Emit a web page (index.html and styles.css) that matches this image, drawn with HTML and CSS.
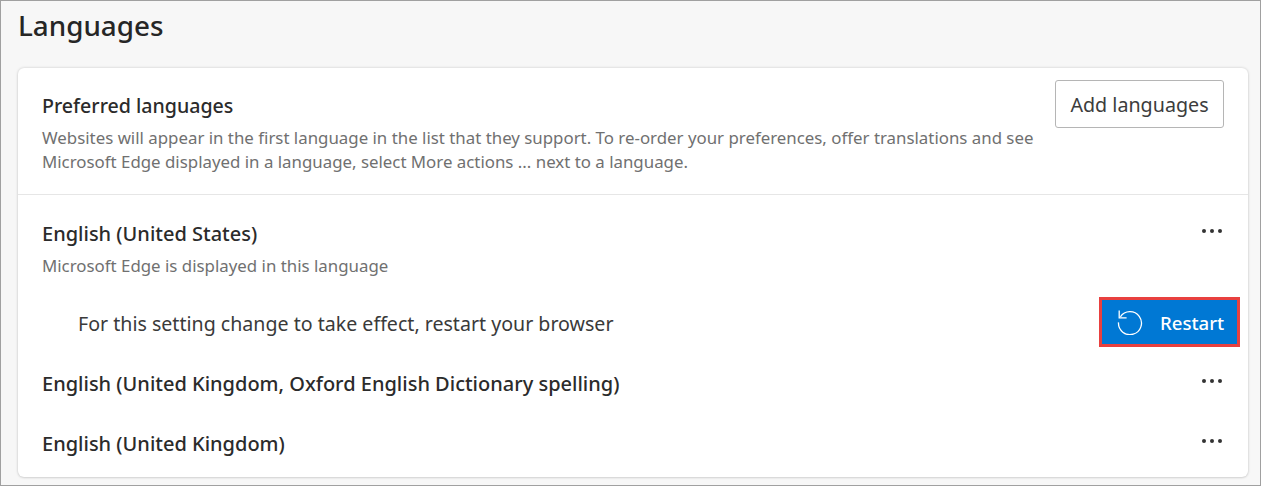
FILE: index.html
```html
<!DOCTYPE html>
<html lang="en">
<head>
<meta charset="utf-8">
<title>Languages</title>
<link rel="stylesheet" href="styles.css">
</head>
<body>
<main class="frame">
  <h1 class="title">Languages</h1>
  <section class="card">
    <header class="card-head">
      <div class="head-text">
        <h2 class="name head-name">Preferred languages</h2>
        <p class="desc">Websites will appear in the first language in the list that they support. To re-order your preferences, offer translations and see Microsoft Edge displayed in a language, select More actions ... next to a language.</p>
      </div>
      <button class="add-btn" type="button">Add languages</button>
    </header>
    <div class="lang lang-first">
      <div>
        <div class="name">English (United States)</div>
        <div class="desc sub">Microsoft Edge is displayed in this language</div>
      </div>
      <button class="more" type="button" aria-label="More actions"><i></i><i></i><i></i></button>
    </div>
    <div class="notice">
      <span class="notice-text">For this setting change to take effect, restart your browser</span>
      <button class="restart" type="button">
        <svg class="restart-icon" width="26" height="26" viewBox="0 0 26 26" fill="none" stroke="#fff" stroke-width="1.3">
          <path d="M3.4 7.8 A11.5 11.5 0 1 1 1.5 13.4"/>
          <path d="M2.2 1.4 V8.8 H9.6"/>
        </svg>
        <span>Restart</span>
      </button>
    </div>
    <div class="lang lang-row">
      <div class="name">English (United Kingdom, Oxford English Dictionary spelling)</div>
      <button class="more" type="button" aria-label="More actions"><i></i><i></i><i></i></button>
    </div>
    <div class="lang lang-row">
      <div class="name">English (United Kingdom)</div>
      <button class="more" type="button" aria-label="More actions"><i></i><i></i><i></i></button>
    </div>
  </section>
</main>
</body>
</html>
```
FILE: styles.css
```css
* { box-sizing: border-box; }
html, body { margin: 0; height: 100%; }
body { font-family: "Noto Sans", "Open Sans", "Liberation Sans", sans-serif; color: #2b2b2b; }
.frame {
  width: 1261px;
  height: 486px;
  overflow: hidden;
  background: #f7f7f7;
  border: 1px solid #a0a0a0;
  padding: 0 12px 0 17px;
}
.title {
  margin: 0;
  height: 67px;
  padding-top: 4px;
  font-size: 27.8px;
  line-height: 40px;
  font-weight: 500;
  color: #262626;
}
.card {
  height: 409px;
  background: #fff;
  border-radius: 6px;
  box-shadow: 0 0 3px rgba(0,0,0,.18), 0 1px 2px rgba(0,0,0,.08);
}
.card-head {
  height: 127px;
  padding: 12px 24px 0 24px;
  display: flex;
  justify-content: space-between;
  align-items: flex-start;
  border-bottom: 1px solid #e6e6e6;
}
.head-text { width: 1000px; padding-top: 13px; }
.name { margin: 0; font-size: 20px; line-height: 26px; font-weight: 500; color: #2b2b2b; }
.head-name { font-size: 19.6px; }
.desc { margin: 7px 0 0; font-size: 16.85px; line-height: 24px; color: #707070; }
.sub { margin-top: 7px; }
.add-btn {
  width: 169px;
  height: 48px;
  background: #fff;
  border: 1px solid #b5b5b5;
  border-radius: 3px;
  font: inherit;
  font-size: 19.7px;
  color: #3c3c3c;
  padding: 0;
}
.lang {
  display: flex;
  justify-content: space-between;
  padding: 0 24px;
}
.lang-first { height: 98px; padding-top: 26px; }
.lang-row { height: 60px; padding-top: 17px; }
.more {
  display: flex;
  gap: 4px;
  width: 22px;
  height: 6px;
  margin-top: 8px;
  padding: 0;
  background: none;
  border: 0;
}
.more i { width: 4px; height: 4px; border-radius: 50%; background: #333; display: block; }
.notice {
  height: 61px;
  padding: 0 8px 0 60px;
  display: flex;
  justify-content: space-between;
  align-items: center;
}
.notice-text { font-size: 19.6px; color: #3a3a3a; }
.restart {
  width: 141px;
  height: 50px;
  margin-top: -3px;
  background: #0078d4;
  border: 3px solid #e8403f;
  border-radius: 0;
  color: #fff;
  font: inherit;
  font-size: 18.6px;
  font-weight: 500;
  display: flex;
  align-items: center;
  gap: 17px;
  padding: 0 0 0 15px;
}
.restart-icon { flex: none; }
```
